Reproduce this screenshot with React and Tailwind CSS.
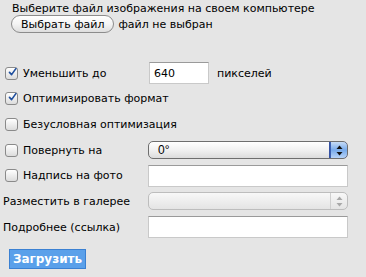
import React from "react";

const font = { fontFamily: '"DejaVu Sans", Verdana, sans-serif' };

const Check = ({ checked }) => (
  <span className="w-[13px] h-[13px] rounded-[3px] border border-[#8a8a8a] bg-gradient-to-b from-white to-[#dcdcdc] flex items-center justify-center shrink-0">
    {checked && (
      <svg width="12" height="12" viewBox="0 0 12 12" className="-mt-[3px] ml-[2px]">
        <path d="M2 6.5 L4.8 9.5 L10.5 1.5" fill="none" stroke="#1f4f9e" strokeWidth="2.2" strokeLinecap="round" strokeLinejoin="round" />
      </svg>
    )}
  </span>
);

const CheckLabel = ({ checked, children, className = "" }) => (
  <div className={"flex items-center gap-[5px] pl-[5px] whitespace-nowrap " + className}>
    <Check checked={checked} />
    <span>{children}</span>
  </div>
);

const TextBox = ({ className = "", value = "" }) => (
  <div className={"h-[22px] bg-white border border-[#c9c9c9] border-t-[#9a9a9a] flex items-center px-[4px] text-black " + className}>
    {value}
  </div>
);

const Arrows = ({ color }) => (
  <svg width="7" height="11" viewBox="0 0 7 11">
    <path d="M3.5 0.5 L6.5 4 L0.5 4 Z" fill={color} />
    <path d="M3.5 10.5 L6.5 7 L0.5 7 Z" fill={color} />
  </svg>
);

export default function App() {
  return (
    <div className="w-[366px] h-[277px] bg-[#e5e5e5] text-[11px] text-black leading-[11px]" style={font}>
      <div className="pl-[12px] pt-[3px]">Выберите файл изображения на своем компьютере</div>
      <div className="flex items-center pl-[11px] mt-[1px] gap-[4px]">
        <div
          className="h-[18px] px-[9px] rounded-full border border-[#8c8c8c] bg-gradient-to-b from-white via-[#f4f4f4] to-[#dedede] flex items-center text-[11px]"
          style={{ fontFamily: '"Lucida Grande", "DejaVu Sans", sans-serif' }}
        >
          Выбрать файл
        </div>
        <span>файл не выбран</span>
      </div>

      <div className="grid grid-cols-[148px_200px] auto-rows-[22px] items-center mt-[29px] gap-y-[3.7px]">
        <CheckLabel checked>Уменьшить до</CheckLabel>
        <div className="flex items-center gap-[8px] pl-[1px]">
          <TextBox className="w-[60px]" value="640" />
          <span>пикселей</span>
        </div>

        <CheckLabel checked className="col-span-2">Оптимизировать формат</CheckLabel>

        <CheckLabel className="col-span-2">Безусловная оптимизация</CheckLabel>

        <CheckLabel>Повернуть на</CheckLabel>
        <div className="h-[18px] rounded-[5px] border border-[#6e6e6e] bg-gradient-to-b from-white via-[#f1f1f1] to-[#dcdcdc] flex items-stretch overflow-hidden">
          <span className="flex-1 flex items-center pl-[9px] text-[12px]" style={{ fontFamily: '"Liberation Sans", Arial, sans-serif' }}>0°</span>
          <span className="w-[17px] border-l border-[#3b5fb0] bg-gradient-to-b from-[#c7dcf6] via-[#77aaeb] to-[#b7d3f7] flex items-center justify-center rounded-r-[4px] outline outline-1 outline-[#3552a3]">
            <Arrows color="#111" />
          </span>
        </div>

        <CheckLabel>Надпись на фото</CheckLabel>
        <TextBox />

        <div className="pl-[3px] whitespace-nowrap">Разместить в галерее</div>
        <div className="h-[18px] rounded-[5px] border border-[#bdbdbd] bg-gradient-to-b from-[#f8f8f8] to-[#e4e4e4] flex items-stretch">
          <span className="flex-1" />
          <span className="w-[17px] border-l border-[#cfcfcf] flex items-center justify-center">
            <Arrows color="#a8a8a8" />
          </span>
        </div>

        <div className="pl-[3px] whitespace-nowrap">Подробнее (ссылка)</div>
        <TextBox />
      </div>

      <div className="pl-[9px] mt-[11px]">
        <div className="w-[77px] h-[20px] bg-[#5aa0ea] border border-[#3a80d2] text-white font-bold text-[12px] flex items-center justify-center">
          Загрузить
        </div>
      </div>
    </div>
  );
}
